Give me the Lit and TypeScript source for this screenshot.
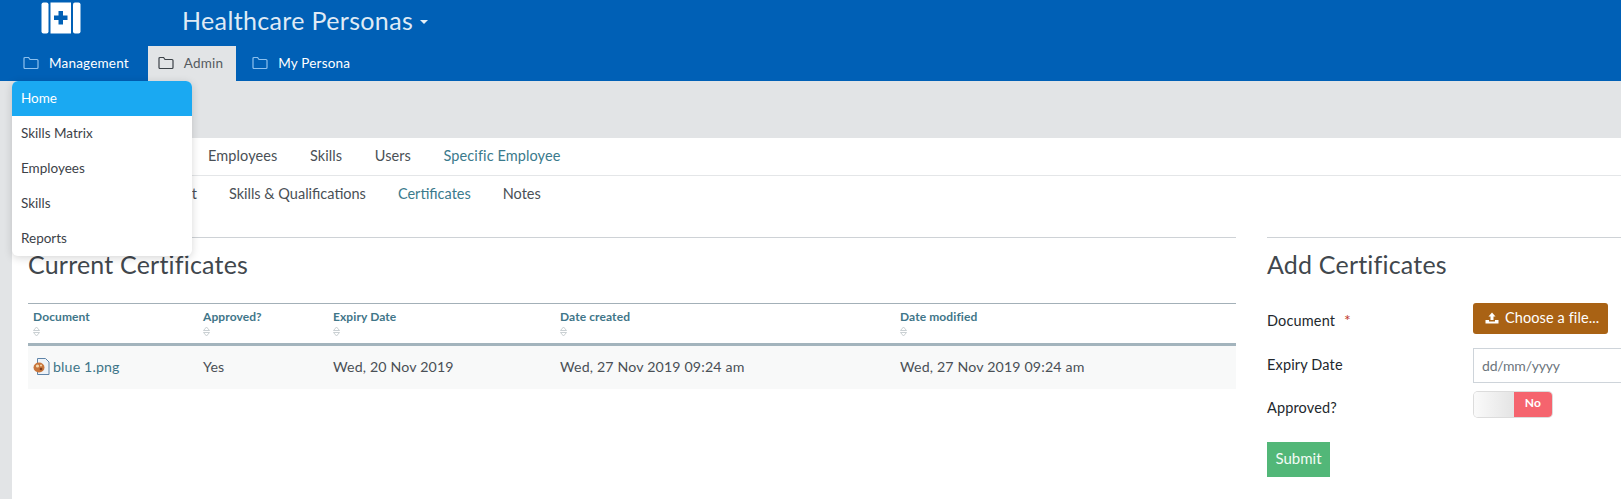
import {LitElement, html, css, svg} from 'lit';
import {customElement} from 'lit/decorators.js';

const folder = svg`<path d="M1 2.500 a1 1 0 0 1 1-1 h3.600 l1.400 2 h7 a1 1 0 0 1 1 1 v7 a1 1 0 0 1-1 1 h-12 a1 1 0 0 1-1-1 z" fill="none" stroke="currentColor" stroke-width="1.200"/>`;

const navItems = [
  {label: 'Management', active: false},
  {label: 'Admin', active: true},
  {label: 'My Persona', active: false},
];

const menuItems = ['Home', 'Skills Matrix', 'Employees', 'Skills', 'Reports'];

const columns = [
  {label: 'Document', width: 170},
  {label: 'Approved?', width: 130},
  {label: 'Expiry Date', width: 227},
  {label: 'Date created', width: 340},
  {label: 'Date modified', width: 341},
];

@customElement('app-root')
export class AppRoot extends LitElement {
  static styles = css`
    :host {
      display: block;
      position: relative;
      height: 499px;
      overflow: hidden;
      background: #e2e4e6;
      font-family: "Lato", "Open Sans", sans-serif;
      color: #343a40;
    }
    .top {
      background: #0060b6;
      height: 81px;
      display: flex;
      flex-direction: column;
    }
    .brand {
      height: 46px;
      display: flex;
      align-items: flex-start;
    }
    .logo {
      width: 40px;
      height: 32px;
      margin: 2px 0 0 41px;
    }
    .title {
      margin-left: 101px;
      font-size: 25px;
      line-height: 40px;
      letter-spacing: 0.35px;
      color: #dfeaf5;
      display: flex;
      align-items: center;
      gap: 7px;
    }
    .caret {
      width: 0;
      height: 0;
      margin-top: 3px;
      border-left: 4.500px solid transparent;
      border-right: 4.500px solid transparent;
      border-top: 4.500px solid #e6f0f8;
    }
    .nav {
      display: flex;
      gap: 6px;
      height: 35px;
      padding-left: 13px;
    }
    .nav-item {
      display: flex;
      align-items: center;
      gap: 10px;
      padding: 0 13px 2px 10px;
      font-size: 13.500px;
      letter-spacing: 0.2px;
      color: #fff;
    }
    .nav-item svg {
      width: 16px;
      height: 14px;
      color: #8cc0ee;
    }
    .nav-item.active {
      background: #e2e4e6;
      color: #555b60;
    }
    .nav-item.active svg {
      color: #3c4248;
    }
    .band {
      height: 57px;
    }
    .main {
      margin-left: 12px;
      height: 361px;
      background: #fff;
    }
    .tabs {
      display: flex;
      align-items: center;
      font-size: 14.500px;
      color: #4a5056;
    }
    .tabs .on {
      color: #3b7a8c;
    }
    .tabs-one {
      gap: 32.500px;
      height: 35px;
      padding: 0 0 2px 196px;
      letter-spacing: 0.1px;
      border-bottom: 1px solid #e4e6e8;
    }
    .tabs-two {
      gap: 32px;
      height: 35px;
      padding: 0 0 1px 105px;
    }
    .columns {
      display: grid;
      grid-template-columns: 1208px 1fr;
      gap: 31px;
      padding: 25px 0 0 16px;
    }
    section {
      border-top: 1px solid #ced2d6;
      min-width: 0;
    }
    h2 {
      margin: 0;
      height: 65px;
      font-size: 25px;
      font-weight: 400;
      line-height: 52px;
      letter-spacing: 0.2px;
      color: #41474d;
    }
    table {
      width: 100%;
      border-collapse: collapse;
      table-layout: fixed;
    }
    th {
      border-top: 1px solid #a3b0b8;
      border-bottom: 3px solid #a3b4bd;
      height: 33px;
      padding: 6px 5px 0;
      text-align: left;
      vertical-align: top;
      font-size: 12px;
      line-height: 14px;
      font-weight: 700;
      letter-spacing: 0.1px;
      color: #3f7689;
    }
    .sort {
      display: block;
      width: 7px;
      height: 11px;
      margin-top: 2px;
    }
    td {
      height: 41px;
      padding: 0 5px 2px;
      background: #f8f9f9;
      font-size: 14.200px;
      letter-spacing: 0.15px;
      color: #4a5056;
    }
    .file {
      display: flex;
      align-items: center;
      gap: 3px;
      color: #3f7689;
    }
    .file svg {
      width: 17px;
      height: 17px;
    }
    .form {
      display: grid;
      grid-template-columns: 206px 1fr;
      align-items: center;
      color: #23282d;
      font-size: 14.500px;
      letter-spacing: 0.15px;
    }
    .label-doc {
      align-self: start;
      line-height: 33px;
    }
    .label-expiry {
      padding-bottom: 2px;
    }
    .label-approved {
      padding-top: 15px;
    }
    .req {
      color: #c0392b;
      margin-left: 5px;
      font-size: 16px;
    }
    .row-doc {
      height: 45px;
    }
    .choose {
      display: flex;
      align-items: center;
      gap: 6px;
      width: 135px;
      height: 31px;
      box-sizing: border-box;
      padding: 0 0 2px 12px;
      border-radius: 3px;
      background: #a96214;
      color: #fff;
      font-size: 14.500px;
      letter-spacing: 0.1px;
      white-space: nowrap;
    }
    .choose svg {
      width: 14px;
      height: 12px;
    }
    .date {
      height: 35px;
      width: 300px;
      box-sizing: border-box;
      padding-left: 8px;
      display: flex;
      align-items: center;
      border: 1px solid #ced4da;
      background: #fff;
      color: #6c757d;
      font-size: 14px;
      letter-spacing: -0.2px;
    }
    .toggle {
      display: flex;
      width: 78px;
      height: 25px;
      margin: 9px 0 0 1px;
      border-radius: 4px;
      overflow: hidden;
      box-shadow: 0 0 0 1px #dcdcdc;
      font-size: 12px;
      font-weight: 700;
      color: #fff;
    }
    .knob {
      flex: 0 0 40px;
      background: linear-gradient(90deg, #fafafa, #e4e4e4);
    }
    .no {
      flex: 1;
      background: #f5646e;
      display: flex;
      align-items: center;
      justify-content: center;
      padding-bottom: 4px;
      box-sizing: border-box;
    }
    .submit {
      margin-top: 25px;
      width: 63px;
      height: 35px;
      box-sizing: border-box;
      padding-bottom: 3px;
      background: #52b778;
      color: #f2fbf5;
      font-size: 15px;
      display: flex;
      align-items: center;
      justify-content: center;
    }
    .menu {
      position: absolute;
      left: 12px;
      top: 81px;
      width: 180px;
      height: 175px;
      background: #fff;
      border-radius: 6px;
      box-shadow: 0 2px 8px rgba(0, 0, 0, 0.16);
      overflow: hidden;
      font-size: 13.500px;
      color: #3c4248;
    }
    .menu div {
      height: 33px;
      padding: 0 0 2px 9px;
      display: flex;
      align-items: center;
    }
    .menu .current {
      background: #1aa9f2;
      color: #fff;
    }
  `;

  renderLogo() {
    return html`<svg class="logo" viewBox="0 0 40 32">
      <rect x="0.500" y="0.500" width="7" height="31" rx="2" fill="#fff"/>
      <rect x="9.500" y="0.500" width="20.500" height="31" fill="#fff"/>
      <rect x="32" y="0.500" width="7.500" height="31" rx="2" fill="#fff"/>
      <path d="M17.500 9h4.500v4.500h4.500v4.500h-4.500v4.500h-4.500v-4.500h-4.500v-4.500h4.500z" fill="#0060b6"/>
    </svg>`;
  }

  renderSort() {
    return html`<svg class="sort" viewBox="0 0 7 11">
      <path d="M0.500 4.500 L3.500 1 L6.500 4.500 Z M0.500 6.500 L3.500 10 L6.500 6.500 Z" fill="none" stroke="#bcc4c8" stroke-width="0.800"/>
    </svg>`;
  }

  renderFileIcon() {
    return html`<svg viewBox="0 0 17 17">
      <path d="M4.500 0.500h8l3.500 3.500v12.500h-11.500z" fill="#eef3f8" stroke="#5f84a8"/>
      <ellipse cx="6" cy="9.500" rx="5.500" ry="5" fill="#c8763c"/>
      <circle cx="4.500" cy="8" r="1.600" fill="#f3d9b0"/>
      <circle cx="8" cy="11" r="1.300" fill="#7a3a1c"/>
      <circle cx="8" cy="7.500" r="1" fill="#f3d9b0"/>
    </svg>`;
  }

  render() {
    return html`
      <div class="top">
        <div class="brand">
          ${this.renderLogo()}
          <div class="title">Healthcare Personas <span class="caret"></span></div>
        </div>
        <nav class="nav">
          ${navItems.map((item) => html`
            <div class="nav-item ${item.active ? 'active' : ''}">
              <svg viewBox="0 0 16 14">${folder}</svg>${item.label}
            </div>
          `)}
        </nav>
      </div>
      <div class="band"></div>
      <div class="main">
        <div class="tabs tabs-one">
          <span>Employees</span><span>Skills</span><span>Users</span>
          <span class="on">Specific Employee</span>
        </div>
        <div class="tabs tabs-two">
          <span>Employment</span><span>Skills &amp; Qualifications</span>
          <span class="on">Certificates</span><span>Notes</span>
        </div>
        <div class="columns">
          <section>
            <h2>Current Certificates</h2>
            <table>
              <colgroup>${columns.map((c) => html`<col style="width:${c.width}px">`)}</colgroup>
              <thead>
                <tr>${columns.map((c) => html`<th>${c.label}${this.renderSort()}</th>`)}</tr>
              </thead>
              <tbody>
                <tr>
                  <td><span class="file">${this.renderFileIcon()}blue 1.png</span></td>
                  <td>Yes</td>
                  <td>Wed, 20 Nov 2019</td>
                  <td>Wed, 27 Nov 2019 09:24 am</td>
                  <td>Wed, 27 Nov 2019 09:24 am</td>
                </tr>
              </tbody>
            </table>
          </section>
          <section>
            <h2>Add Certificates</h2>
            <div class="form">
              <div class="label-doc row-doc">Document <span class="req">*</span></div>
              <div class="row-doc">
                <span class="choose">
                  <svg viewBox="0 0 14 12"><path d="M7 0.500L10.500 4.500H8.500V8H5.500V4.500H3.500ZM0.500 8H4V9.500H10V8H13.500V11.500H0.500Z" fill="#fff"/></svg>
                  Choose a file...
                </span>
              </div>
              <div class="label-expiry">Expiry Date</div>
              <div class="date">dd/mm/yyyy</div>
              <div class="label-approved">Approved?</div>
              <div class="toggle"><span class="knob"></span><span class="no">No</span></div>
            </div>
            <div class="submit">Submit</div>
          </section>
        </div>
      </div>
      <div class="menu">
        ${menuItems.map((m, i) => html`<div class=${i === 0 ? 'current' : ''}>${m}</div>`)}
      </div>
    `;
  }
}
